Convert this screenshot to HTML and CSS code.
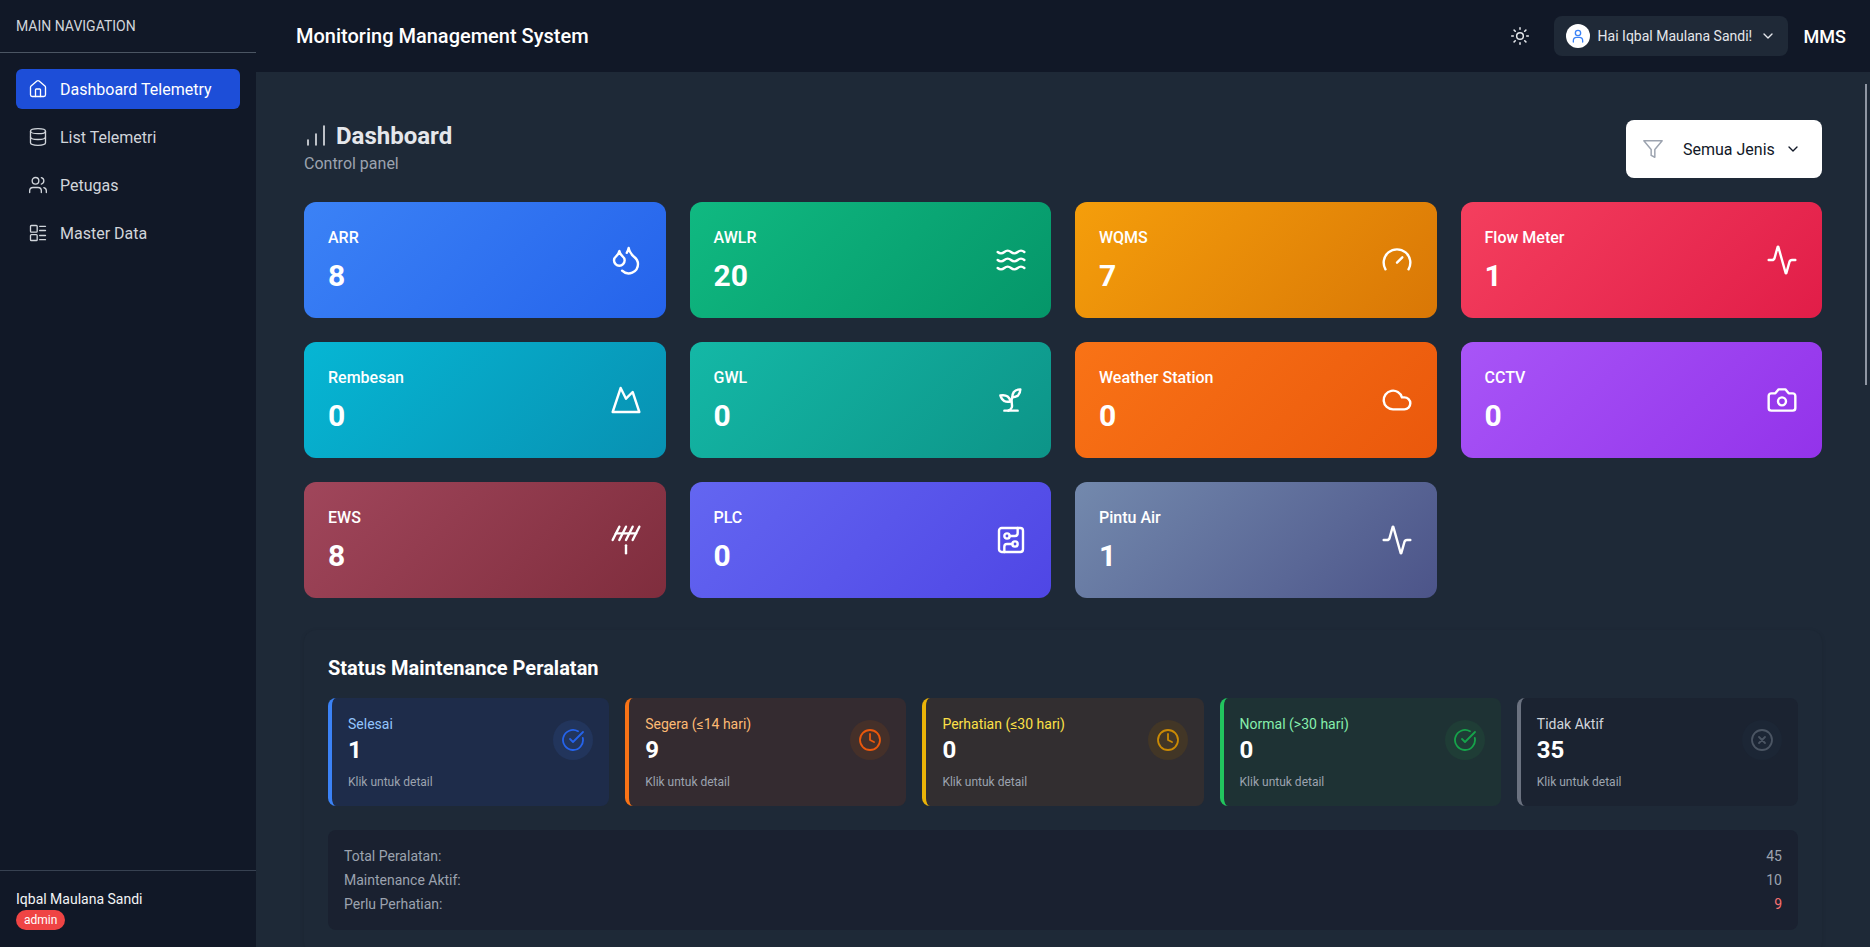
FILE: index.html
```html
<!DOCTYPE html>
<html lang="id">
<head>
    <meta charset="UTF-8">
    <meta name="viewport" content="width=device-width, initial-scale=1.0">
    <title>Monitoring Management System</title>
    <link rel="stylesheet" href="styles.css">
</head>
<body>
<svg class="sprite" xmlns="http://www.w3.org/2000/svg">
    <symbol id="i-home" viewBox="0 0 24 24"><path d="M3 10a2 2 0 0 1 .709-1.528l7-5.999a2 2 0 0 1 2.582 0l7 5.999A2 2 0 0 1 21 10v9a2 2 0 0 1-2 2H5a2 2 0 0 1-2-2z"/><path d="M15 21v-8a1 1 0 0 0-1-1h-4a1 1 0 0 0-1 1v8"/></symbol>
    <symbol id="i-database" viewBox="0 0 24 24"><ellipse cx="12" cy="5" rx="9" ry="3"/><path d="M3 5v14a9 3 0 0 0 18 0V5"/><path d="M3 12a9 3 0 0 0 18 0"/></symbol>
    <symbol id="i-users" viewBox="0 0 24 24"><path d="M16 21v-2a4 4 0 0 0-4-4H6a4 4 0 0 0-4 4v2"/><circle cx="9" cy="7" r="4"/><path d="M22 21v-2a4 4 0 0 0-3-3.87"/><path d="M16 3.13a4 4 0 0 1 0 7.75"/></symbol>
    <symbol id="i-list" viewBox="0 0 24 24"><rect x="3" y="3" width="8" height="8" rx="1"/><rect x="3" y="14" width="8" height="7" rx="1"/><path d="M14 4h7M14 9h7M14 15h7M14 20h7"/></symbol>
    <symbol id="i-bars" viewBox="0 0 24 24"><path d="M4 21v-5M12 21V10M20 21V2"/></symbol>
    <symbol id="i-droplets" viewBox="0 0 24 24"><path d="M7 16.3c2.2 0 4-1.83 4-4.05 0-1.16-.57-2.26-1.71-3.19S7.29 6.75 7 5.3c-.29 1.45-1.14 2.84-2.29 3.76S3 11.1 3 12.25c0 2.22 1.8 4.05 4 4.05z"/><path d="M12.56 6.6A10.97 10.97 0 0 0 14 3.02c.5 2.5 2 4.9 4 6.5s3 3.5 3 5.5a6.98 6.98 0 0 1-11.91 4.97"/></symbol>
    <symbol id="i-waves" viewBox="0 0 24 24"><path d="M2 6c.6.5 1.2 1 2.5 1C7 7 7 5 9.5 5c2.6 0 2.4 2 5 2 2.5 0 2.5-2 5-2 1.3 0 1.9.5 2.5 1"/><path d="M2 12c.6.5 1.2 1 2.5 1 2.5 0 2.5-2 5-2 2.6 0 2.4 2 5 2 2.5 0 2.5-2 5-2 1.3 0 1.9.5 2.5 1"/><path d="M2 18c.6.5 1.2 1 2.5 1 2.5 0 2.5-2 5-2 2.6 0 2.4 2 5 2 2.5 0 2.5-2 5-2 1.3 0 1.9.5 2.5 1"/></symbol>
    <symbol id="i-gauge" viewBox="0 0 24 24"><path d="m12 14 4-4"/><path d="M3.34 19a10 10 0 1 1 17.32 0"/></symbol>
    <symbol id="i-activity" viewBox="0 0 24 24"><path d="M22 12h-2.48a2 2 0 0 0-1.93 1.46l-2.35 8.36a.25.25 0 0 1-.48 0L9.24 2.18a.25.25 0 0 0-.48 0l-2.35 8.36A2 2 0 0 1 4.49 12H2"/></symbol>
    <symbol id="i-mountain" viewBox="0 0 24 24"><path d="m8 3 4 8 5-5 5 15H2L8 3z"/></symbol>
    <symbol id="i-sprout" viewBox="0 0 24 24"><path d="M7 20h10"/><path d="M10 20c5.5-2.5.8-6.4 3-10"/><path d="M9.5 9.4c1.1.8 1.8 2.2 2.3 3.7-2 .4-3.5.4-4.8-.3-1.2-.6-2.3-1.9-3-4.2 2.8-.5 4.4 0 5.5.8z"/><path d="M14.1 6a7 7 0 0 0-1.1 4c1.9-.1 3.3-.6 4.3-1.4 1-1 1.6-2.3 1.7-4.6-2.7.1-4 1-4.9 2z"/></symbol>
    <symbol id="i-cloud" viewBox="0 0 24 24"><path d="M17.5 19H9a7 7 0 1 1 6.71-9h1.79a4.5 4.5 0 1 1 0 9Z"/></symbol>
    <symbol id="i-camera" viewBox="0 0 24 24"><path d="M14.5 4h-5L7 7H4a2 2 0 0 0-2 2v9a2 2 0 0 0 2 2h16a2 2 0 0 0 2-2V9a2 2 0 0 0-2-2h-3l-2.5-3z"/><circle cx="12" cy="13" r="3"/></symbol>
    <symbol id="i-antenna" viewBox="0 0 24 24"><path d="M2 12 7 2"/><path d="m7 12 5-10"/><path d="m12 12 5-10"/><path d="m17 12 5-10"/><path d="M4.5 7h15"/><path d="M12 16v6"/></symbol>
    <symbol id="i-circuit" viewBox="0 0 24 24"><rect x="3" y="3" width="18" height="18" rx="2"/><path d="M11 9h4a2 2 0 0 0 2-2V3"/><circle cx="9" cy="9" r="2"/><path d="M7 21v-4a2 2 0 0 1 2-2h4"/><circle cx="15" cy="15" r="2"/></symbol>
    <symbol id="i-sun" viewBox="0 0 24 24"><circle cx="12" cy="12" r="4"/><path d="M12 2v2M12 20v2M4.93 4.93l1.41 1.41M17.66 17.66l1.41 1.41M2 12h2M20 12h2M6.34 17.66l-1.41 1.41M19.07 4.93l-1.41 1.41"/></symbol>
    <symbol id="i-user" viewBox="0 0 24 24"><circle cx="12" cy="7.5" r="4"/><path d="M5 21v-2a5 5 0 0 1 5-5h4a5 5 0 0 1 5 5v2"/></symbol>
    <symbol id="i-chevron" viewBox="0 0 24 24"><path d="m6 9 6 6 6-6"/></symbol>
    <symbol id="i-filter" viewBox="0 0 24 24"><polygon points="22 3 2 3 10 12.46 10 19 14 21 14 12.46 22 3"/></symbol>
    <symbol id="i-check" viewBox="0 0 24 24"><path d="M21.801 10A10 10 0 1 1 17 3.335"/><path d="m9 11 3 3L22 4"/></symbol>
    <symbol id="i-clock" viewBox="0 0 24 24"><circle cx="12" cy="12" r="10"/><path d="M12 6v6l4 2"/></symbol>
    <symbol id="i-x" viewBox="0 0 24 24"><circle cx="12" cy="12" r="10"/><path d="m15 9-6 6M9 9l6 6"/></symbol>
</svg>

<aside class="sidebar">
    <div class="sidebar-title">MAIN NAVIGATION</div>
    <nav class="side-nav">
        <a class="nav-item active"><svg class="nav-icon"><use href="#i-home"/></svg>Dashboard Telemetry</a>
        <a class="nav-item"><svg class="nav-icon"><use href="#i-database"/></svg>List Telemetri</a>
        <a class="nav-item"><svg class="nav-icon"><use href="#i-users"/></svg>Petugas</a>
        <a class="nav-item"><svg class="nav-icon"><use href="#i-list"/></svg>Master Data</a>
    </nav>
    <div class="side-user">
        <div class="side-user-name">Iqbal Maulana Sandi</div>
        <span class="role-badge">admin</span>
    </div>
</aside>

<div class="page">
    <header class="topbar">
        <div class="app-title">Monitoring Management System</div>
        <div class="topbar-right">
            <svg class="theme-icon"><use href="#i-sun"/></svg>
            <div class="user-pill">
                <span class="avatar"><svg class="avatar-icon"><use href="#i-user"/></svg></span>
                <span class="user-greet">Hai Iqbal Maulana Sandi!</span>
                <svg class="chev"><use href="#i-chevron"/></svg>
            </div>
            <div class="brand">MMS</div>
        </div>
    </header>

    <main class="main">
        <div class="content">
            <div class="page-head">
                <div>
                    <h1 class="page-title"><svg class="title-icon"><use href="#i-bars"/></svg>Dashboard</h1>
                    <p class="page-sub">Control panel</p>
                </div>
                <div class="filter-btn">
                    <svg class="filter-icon"><use href="#i-filter"/></svg>
                    <span class="filter-text">Semua Jenis</span>
                    <svg class="chev dark"><use href="#i-chevron"/></svg>
                </div>
            </div>

            <section class="stat-grid">
                <div class="stat-card c-blue"><div><div class="stat-label">ARR</div><div class="stat-value">8</div></div><svg class="stat-icon"><use href="#i-droplets"/></svg></div>
                <div class="stat-card c-green"><div><div class="stat-label">AWLR</div><div class="stat-value">20</div></div><svg class="stat-icon"><use href="#i-waves"/></svg></div>
                <div class="stat-card c-amber"><div><div class="stat-label">WQMS</div><div class="stat-value">7</div></div><svg class="stat-icon"><use href="#i-gauge"/></svg></div>
                <div class="stat-card c-rose"><div><div class="stat-label">Flow Meter</div><div class="stat-value">1</div></div><svg class="stat-icon"><use href="#i-activity"/></svg></div>
                <div class="stat-card c-cyan"><div><div class="stat-label">Rembesan</div><div class="stat-value">0</div></div><svg class="stat-icon"><use href="#i-mountain"/></svg></div>
                <div class="stat-card c-teal"><div><div class="stat-label">GWL</div><div class="stat-value">0</div></div><svg class="stat-icon"><use href="#i-sprout"/></svg></div>
                <div class="stat-card c-orange"><div><div class="stat-label">Weather Station</div><div class="stat-value">0</div></div><svg class="stat-icon"><use href="#i-cloud"/></svg></div>
                <div class="stat-card c-purple"><div><div class="stat-label">CCTV</div><div class="stat-value">0</div></div><svg class="stat-icon"><use href="#i-camera"/></svg></div>
                <div class="stat-card c-wine"><div><div class="stat-label">EWS</div><div class="stat-value">8</div></div><svg class="stat-icon"><use href="#i-antenna"/></svg></div>
                <div class="stat-card c-indigo"><div><div class="stat-label">PLC</div><div class="stat-value">0</div></div><svg class="stat-icon"><use href="#i-circuit"/></svg></div>
                <div class="stat-card c-slate"><div><div class="stat-label">Pintu Air</div><div class="stat-value">1</div></div><svg class="stat-icon"><use href="#i-activity"/></svg></div>
            </section>

            <section class="panel">
                <h2 class="panel-title">Status Maintenance Peralatan</h2>
                <div class="status-grid">
                    <div class="status-card s-blue">
                        <div class="status-top">
                            <div><div class="status-label">Selesai</div><div class="status-value">1</div></div>
                            <span class="status-circle"><svg class="status-icon"><use href="#i-check"/></svg></span>
                        </div>
                        <div class="status-hint">Klik untuk detail</div>
                    </div>
                    <div class="status-card s-orange">
                        <div class="status-top">
                            <div><div class="status-label">Segera (≤14 hari)</div><div class="status-value">9</div></div>
                            <span class="status-circle"><svg class="status-icon"><use href="#i-clock"/></svg></span>
                        </div>
                        <div class="status-hint">Klik untuk detail</div>
                    </div>
                    <div class="status-card s-yellow">
                        <div class="status-top">
                            <div><div class="status-label">Perhatian (≤30 hari)</div><div class="status-value">0</div></div>
                            <span class="status-circle"><svg class="status-icon"><use href="#i-clock"/></svg></span>
                        </div>
                        <div class="status-hint">Klik untuk detail</div>
                    </div>
                    <div class="status-card s-green">
                        <div class="status-top">
                            <div><div class="status-label">Normal (&gt;30 hari)</div><div class="status-value">0</div></div>
                            <span class="status-circle"><svg class="status-icon"><use href="#i-check"/></svg></span>
                        </div>
                        <div class="status-hint">Klik untuk detail</div>
                    </div>
                    <div class="status-card s-gray">
                        <div class="status-top">
                            <div><div class="status-label">Tidak Aktif</div><div class="status-value">35</div></div>
                            <span class="status-circle"><svg class="status-icon"><use href="#i-x"/></svg></span>
                        </div>
                        <div class="status-hint">Klik untuk detail</div>
                    </div>
                </div>
                <div class="summary">
                    <div class="summary-row"><span>Total Peralatan:</span><span>45</span></div>
                    <div class="summary-row"><span>Maintenance Aktif:</span><span>10</span></div>
                    <div class="summary-row"><span>Perlu Perhatian:</span><span class="danger">9</span></div>
                </div>
            </section>
        </div>
        <div class="scroll-thumb"></div>
    </main>
</div>
</body>
</html>
```
FILE: styles.css
```css
html, body {
    margin: 0;
    padding: 0;
    height: 100%;
    overflow: hidden;
}
body {
    display: flex;
    background: #1e2937;
    color: #fff;
    font-family: Roboto, "Noto Sans", sans-serif;
}
svg {
    fill: none;
    stroke: currentColor;
    stroke-width: 2;
    stroke-linecap: round;
    stroke-linejoin: round;
    flex-shrink: 0;
}
.sprite {
    display: none;
}

/* sidebar */
.sidebar {
    width: 256px;
    height: 100%;
    flex-shrink: 0;
    display: flex;
    flex-direction: column;
    background: #111827;
}
.sidebar-title {
    height: 53px;
    padding: 0 16px;
    display: flex;
    align-items: center;
    box-sizing: border-box;
    font-size: 14px;
    color: #d1d5db;
    border-bottom: 1px solid #4b5563;
}
.side-nav {
    flex: 1;
    padding: 16px;
    display: flex;
    flex-direction: column;
    gap: 8px;
}
.nav-item {
    height: 40px;
    padding: 0 12px;
    display: flex;
    align-items: center;
    gap: 12px;
    border-radius: 6px;
    font-size: 16px;
    color: #d1d5db;
}
.nav-item.active {
    background: #1d4ed8;
    color: #fff;
}
.nav-icon {
    width: 20px;
    height: 20px;
    stroke-width: 1.6;
}
.side-user {
    height: 77px;
    padding: 16px;
    box-sizing: border-box;
    border-top: 1px solid #374151;
}
.side-user-name {
    font-size: 14px;
    line-height: 20px;
    margin-top: 2px;
    color: #f3f4f6;
}
.role-badge {
    display: inline-block;
    padding: 0 8px;
    border-radius: 10px;
    background: #ef4444;
    font-size: 12px;
    line-height: 20px;
}

/* top bar */
.page {
    flex: 1;
    min-width: 0;
    height: 100%;
    display: flex;
    flex-direction: column;
}
.topbar {
    height: 72px;
    flex-shrink: 0;
    padding: 0 24px 0 40px;
    display: flex;
    align-items: center;
    justify-content: space-between;
    background: #111827;
}
.app-title {
    font-size: 20px;
    font-weight: 500;
}
.topbar-right {
    display: flex;
    align-items: center;
}
.theme-icon {
    width: 20px;
    height: 20px;
    margin-right: 24px;
    color: #e5e7eb;
    stroke-width: 1.8;
}
.user-pill {
    width: 234px;
    height: 40px;
    padding: 0 12px;
    box-sizing: border-box;
    display: flex;
    align-items: center;
    border-radius: 8px;
    background: #1f2937;
    font-size: 14px;
    color: #e5e7eb;
}
.avatar {
    width: 24px;
    height: 24px;
    display: flex;
    align-items: center;
    justify-content: center;
    border-radius: 50%;
    background: #fff;
    color: #3b82f6;
    margin-right: 8px;
}
.avatar-icon {
    width: 16px;
    height: 16px;
}
.user-greet {
    flex: 1;
}
.chev {
    width: 16px;
    height: 16px;
    color: #e5e7eb;
}
.chev.dark {
    color: #111827;
}
.brand {
    margin-left: 16px;
    font-size: 18px;
    font-weight: 500;
}

/* main area */
.main {
    flex: 1;
    min-height: 0;
    position: relative;
    overflow: hidden;
    background: #1e2937;
}
.scroll-thumb {
    position: absolute;
    top: 12px;
    right: 3px;
    width: 2px;
    height: 301px;
    background: #8f96a3;
}
.content {
    box-sizing: border-box;
    padding: 48px;
}
.page-head {
    display: flex;
    justify-content: space-between;
    align-items: flex-start;
    margin-bottom: 24px;
}
.page-title {
    margin: 0;
    display: flex;
    align-items: center;
    gap: 8px;
    font-size: 24px;
    line-height: 32px;
    font-weight: 700;
    color: #e5e7eb;
}
.title-icon {
    width: 24px;
    height: 24px;
    stroke-width: 1.6;
}
.page-sub {
    margin: 0;
    font-size: 16px;
    line-height: 24px;
    color: #9ca3af;
}
.filter-btn {
    width: 196px;
    height: 58px;
    padding: 0 32px 0 16px;
    box-sizing: border-box;
    display: flex;
    align-items: center;
    white-space: nowrap;
    border-radius: 8px;
    background: #fff;
    color: #111827;
    font-size: 16px;
}
.filter-icon {
    width: 22px;
    height: 22px;
    color: #9ca3af;
    stroke-width: 1.6;
}
.filter-text {
    margin-left: 19px;
    margin-right: 10px;
}

/* stat cards */
.stat-grid {
    display: grid;
    grid-template-columns: repeat(4, 1fr);
    gap: 24px;
}
.stat-card {
    height: 116px;
    padding: 24px;
    box-sizing: border-box;
    display: flex;
    align-items: center;
    justify-content: space-between;
    border-radius: 12px;
    color: #fff;
}
.stat-label {
    font-size: 16px;
    line-height: 24px;
    font-weight: 500;
    margin-bottom: 8px;
}
.stat-value {
    font-size: 30px;
    line-height: 36px;
    font-weight: 700;
}
.stat-icon {
    width: 32px;
    height: 32px;
    stroke-width: 1.8;
}
.c-blue { background: linear-gradient(135deg, #3b82f6, #2563eb); }
.c-green { background: linear-gradient(135deg, #10b981, #059669); }
.c-amber { background: linear-gradient(135deg, #f59e0b, #d97706); }
.c-rose { background: linear-gradient(135deg, #f43f5e, #e11d48); }
.c-cyan { background: linear-gradient(135deg, #06b6d4, #0891b2); }
.c-teal { background: linear-gradient(135deg, #14b8a6, #0d9488); }
.c-orange { background: linear-gradient(135deg, #f97316, #ea580c); }
.c-purple { background: linear-gradient(135deg, #a855f7, #9333ea); }
.c-wine { background: linear-gradient(135deg, #a0465b, #7f2d3d); }
.c-indigo { background: linear-gradient(135deg, #6366f1, #4f46e5); }
.c-slate { background: linear-gradient(135deg, #7389ad, #4c5489); }

/* maintenance panel */
.panel {
    margin-top: 32px;
    padding: 24px;
    border-radius: 12px;
    background: #1e2937;
    box-shadow: 0 1px 4px rgba(0, 0, 0, 0.12);
}
.panel-title {
    margin: 0 0 16px;
    font-size: 20px;
    line-height: 28px;
    font-weight: 700;
}
.status-grid {
    display: grid;
    grid-template-columns: repeat(5, 1fr);
    gap: 16px;
    margin-bottom: 24px;
}
.status-card {
    height: 108px;
    padding: 16px;
    box-sizing: border-box;
    border-left: 4px solid;
    border-radius: 8px;
}
.status-top {
    display: flex;
    align-items: center;
    justify-content: space-between;
}
.status-label {
    font-size: 14px;
    line-height: 20px;
}
.status-value {
    font-size: 24px;
    line-height: 32px;
    font-weight: 700;
}
.status-hint {
    margin-top: 8px;
    font-size: 12px;
    line-height: 16px;
    color: #9ca3af;
}
.status-circle {
    width: 40px;
    height: 40px;
    display: flex;
    align-items: center;
    justify-content: center;
    border-radius: 50%;
}
.status-icon {
    width: 24px;
    height: 24px;
    stroke-width: 1.8;
}
.s-blue { background: #1e2c4a; border-color: #3b82f6; }
.s-blue .status-label { color: #93c5fd; }
.s-blue .status-circle { background: #22355c; color: #2563eb; }
.s-orange { background: #342b30; border-color: #f97316; }
.s-orange .status-label { color: #fdba74; }
.s-orange .status-circle { background: #453029; color: #ea580c; }
.s-yellow { background: #322e30; border-color: #eab308; }
.s-yellow .status-label { color: #fde047; }
.s-yellow .status-circle { background: #423626; color: #ca8a04; }
.s-green { background: #1e3234; border-color: #22c55e; }
.s-green .status-label { color: #86efac; }
.s-green .status-circle { background: #1f3d36; color: #16a34a; }
.s-gray { background: #1b2331; border-color: #6b7280; }
.s-gray .status-label { color: #d1d5db; }
.s-gray .status-circle { background: #1c2635; color: #4b5563; }
.summary {
    padding: 16px;
    display: flex;
    flex-direction: column;
    gap: 4px;
    border-radius: 8px;
    background: #1a2130;
    font-size: 14px;
    line-height: 20px;
    color: #9ca3af;
}
.summary-row {
    display: flex;
    justify-content: space-between;
}
.danger {
    color: #f87171;
}
```
